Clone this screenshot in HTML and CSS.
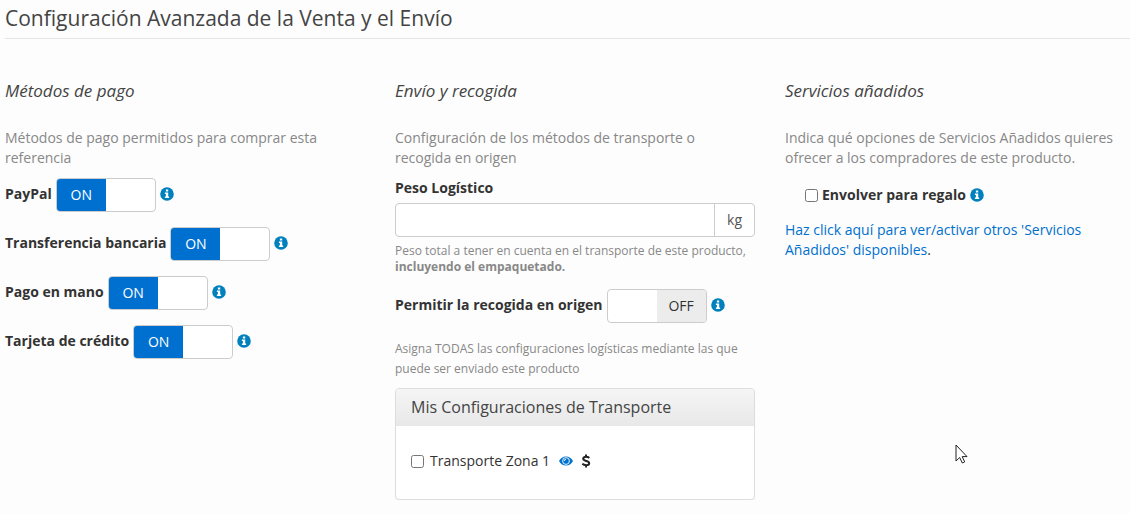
FILE: index.html
```html
<!DOCTYPE html>
<html lang="es">
  <head>
    <meta charset="UTF-8" />
    <meta name="viewport" content="width=device-width, initial-scale=1.0" />
    <title>Configuración Avanzada de la Venta y el Envío</title>
    <link rel="stylesheet" href="styles.css">
  </head>
  <body>
    <!-- Iconos compartidos -->
    <svg class="sprite" aria-hidden="true">
      <symbol id="icon-info" viewBox="0 0 14 14">
        <circle cx="7" cy="7" r="6.8" fill="#0081bd" />
        <path fill="#fff" d="M5.9 2.5h2.3v2H5.9zM4.9 5.5h3.3v4.1h.9v1.5H4.9V9.6h1V7h-1z" />
      </symbol>
      <symbol id="icon-eye" viewBox="0 0 14 10">
        <path fill="#0072d0" d="M0 5Q2.500.5 7 .5T14 5Q11.500 9.500 7 9.500T0 5z" />
        <circle cx="7" cy="5" r="3.400" fill="#0072d0" stroke="#fff" stroke-width=".9" />
        <path fill="none" stroke="#fff" stroke-width=".9" d="M5.300 5A1.700 1.700 0 0 1 7 3.300" />
      </symbol>
      <symbol id="icon-dollar" viewBox="0 0 10 14">
        <path fill="none" stroke="#222" stroke-width="2" d="M8.300 4C7.600 3.300 6.300 2.800 5 2.800 3.300 2.800 2.200 3.600 2.200 4.800 2.200 7.600 8.200 6.300 8.200 9.200 8.200 10.500 6.900 11.200 5.200 11.200 3.700 11.200 2.300 10.700 1.300 9.800M5 .5v2.500M5 11v2.500" />
      </symbol>
    </svg>

    <form class="settings">
      <h1>Configuración Avanzada de la Venta y el Envío</h1>

      <div class="columns">
        <section>
          <h2>Métodos de pago</h2>
          <p class="intro">Métodos de pago permitidos para comprar esta referencia</p>
          <div class="toggle-list">
            <div class="toggle-row">
              <label for="paypal">PayPal</label>
              <span class="switch">
                <input type="checkbox" id="paypal" checked />
                <span class="on">ON</span><span class="off">OFF</span>
              </span>
              <svg class="info"><use href="#icon-info" /></svg>
            </div>
            <div class="toggle-row">
              <label for="transferencia">Transferencia bancaria</label>
              <span class="switch">
                <input type="checkbox" id="transferencia" checked />
                <span class="on">ON</span><span class="off">OFF</span>
              </span>
              <svg class="info"><use href="#icon-info" /></svg>
            </div>
            <div class="toggle-row">
              <label for="mano">Pago en mano</label>
              <span class="switch">
                <input type="checkbox" id="mano" checked />
                <span class="on">ON</span><span class="off">OFF</span>
              </span>
              <svg class="info"><use href="#icon-info" /></svg>
            </div>
            <div class="toggle-row">
              <label for="tarjeta">Tarjeta de crédito</label>
              <span class="switch">
                <input type="checkbox" id="tarjeta" checked />
                <span class="on">ON</span><span class="off">OFF</span>
              </span>
              <svg class="info"><use href="#icon-info" /></svg>
            </div>
          </div>
        </section>

        <section>
          <h2>Envío y recogida</h2>
          <p class="intro">Configuración de los métodos de transporte o recogida en origen</p>
          <label class="field-label" for="peso">Peso Logístico</label>
          <div class="input-group">
            <input type="text" id="peso" />
            <span class="addon">kg</span>
          </div>
          <p class="help">Peso total a tener en cuenta en el transporte de este producto, <strong>incluyendo el empaquetado.</strong></p>
          <div class="toggle-row">
            <label for="recogida">Permitir la recogida en origen</label>
            <span class="switch">
              <input type="checkbox" id="recogida" />
              <span class="on">ON</span><span class="off">OFF</span>
            </span>
            <svg class="info"><use href="#icon-info" /></svg>
          </div>
          <p class="note">Asigna TODAS las configuraciones logísticas mediante las que puede ser enviado este producto</p>
          <div class="panel">
            <h3>Mis Configuraciones de Transporte</h3>
            <div class="panel-body">
              <input type="checkbox" id="zona1" />
              <label for="zona1">Transporte Zona 1</label>
              <a href="#" aria-label="Ver"><svg class="eye"><use href="#icon-eye" /></svg></a>
              <svg class="dollar"><use href="#icon-dollar" /></svg>
            </div>
          </div>
        </section>

        <section>
          <h2>Servicios añadidos</h2>
          <p class="intro">Indica qué opciones de Servicios Añadidos quieres ofrecer a los compradores de este producto.</p>
          <div class="gift">
            <input type="checkbox" id="regalo" />
            <label for="regalo">Envolver para regalo</label>
            <svg class="info"><use href="#icon-info" /></svg>
          </div>
          <p><a href="#">Haz click aquí para ver/activar otros 'Servicios Añadidos' disponibles</a>.</p>
        </section>
      </div>
    </form>

    <svg class="cursor" viewBox="0 0 13 20" aria-hidden="true">
      <path fill="#fff" stroke="#222" d="M1 1v16l3.700-3.500 2.600 5.500 2.400-1.100-2.500-5.300H12z" />
    </svg>
  </body>
</html>
```

FILE: styles.css
```css
* {
  box-sizing: border-box;
}

body {
  margin: 0;
  background: #fdfdfd;
  color: #333;
  font-family: "Open Sans", Arial, sans-serif;
  font-size: 14px;
  line-height: 20px;
}

.sprite {
  display: none;
}

svg {
  display: block;
  flex: none;
}

.settings {
  padding-left: 5px;
}

h1,
h2,
h3 {
  margin: 0;
  font-weight: 400;
  color: #444;
}

h1 {
  padding: 3px 0 5px;
  border-bottom: 1px solid #e5e5e5;
  font-size: 21px;
  line-height: 30px;
}

.columns {
  display: grid;
  grid-template-columns: 24fr 24fr 23fr;
  column-gap: 30px;
  padding-top: 42px;
}

h2 {
  margin-bottom: 27px;
  font-size: 17px;
  font-style: italic;
}

p {
  margin: 0;
}

.intro {
  margin-bottom: 10px;
  padding-right: 10px;
  color: #888;
}

label {
  font-weight: 700;
}

a {
  color: #0070cd;
  text-decoration: none;
}

input[type="checkbox"] {
  width: 13px;
  height: 13px;
  margin: 0;
}

/* Interruptores */
.toggle-list {
  display: grid;
  gap: 15px;
}

.toggle-row {
  display: flex;
  align-items: center;
  gap: 4px;
}

.toggle-row label {
  padding-bottom: 2px;
}

.switch {
  position: relative;
  display: flex;
  width: 100px;
  height: 34px;
  border: 1px solid #ccc;
  border-radius: 4px;
  background: #fff;
  overflow: hidden;
}

.switch input[type="checkbox"] {
  position: absolute;
  inset: 0;
  width: 100%;
  height: 100%;
  opacity: 0;
  cursor: pointer;
}

.on,
.off {
  flex: 1;
  line-height: 32px;
  text-align: center;
  visibility: hidden;
}

.on {
  background: #0070d0;
  color: #fff;
}

.off {
  background: #ececec;
}

.switch input:checked ~ .on,
.switch input:not(:checked) ~ .off {
  visibility: visible;
}

.info {
  width: 14px;
  height: 14px;
}

.toggle-row .info {
  margin-bottom: 2px;
}

/* Peso */
.field-label {
  display: block;
  margin-bottom: 5px;
}

.input-group {
  display: flex;
  height: 34px;
  border: 1px solid #ccc;
  border-radius: 4px;
  background: #fff;
}

.input-group input {
  flex: 1;
  min-width: 0;
  padding: 6px 12px;
  border: 0;
  background: none;
  font: inherit;
}

.addon {
  padding: 0 12px;
  border-left: 1px solid #ccc;
  color: #555;
  line-height: 32px;
}

.help {
  margin: 6px 0 14px;
  color: #888;
  font-size: 12px;
  line-height: 16px;
}

.note {
  margin: 16px 0 9px;
  color: #888;
  font-size: 12px;
}

/* Transporte */
.panel {
  border: 1px solid #ddd;
  border-radius: 4px;
  background: #fff;
  box-shadow: 0 1px 1px rgba(0, 0, 0, 0.05);
}

h3 {
  padding: 8px 15px 9px;
  border-radius: 3px 3px 0 0;
  background: linear-gradient(#f5f5f5, #e8e8e8);
  font-size: 16px;
}

.panel-body {
  display: flex;
  align-items: center;
  padding: 25px 15px 28px;
}

.panel-body label {
  margin: 0 9px 0 6px;
  font-weight: 400;
}

.eye {
  width: 14px;
  height: 10px;
}

.dollar {
  width: 10px;
  height: 14px;
  margin-left: 8px;
}

/* Servicios */
.gift {
  display: flex;
  align-items: center;
  gap: 4px;
  margin: 17px 0 15px;
  padding-left: 20px;
}

/* Puntero */
.cursor {
  position: absolute;
  top: 444px;
  left: 955px;
  width: 13px;
  height: 20px;
}
```
